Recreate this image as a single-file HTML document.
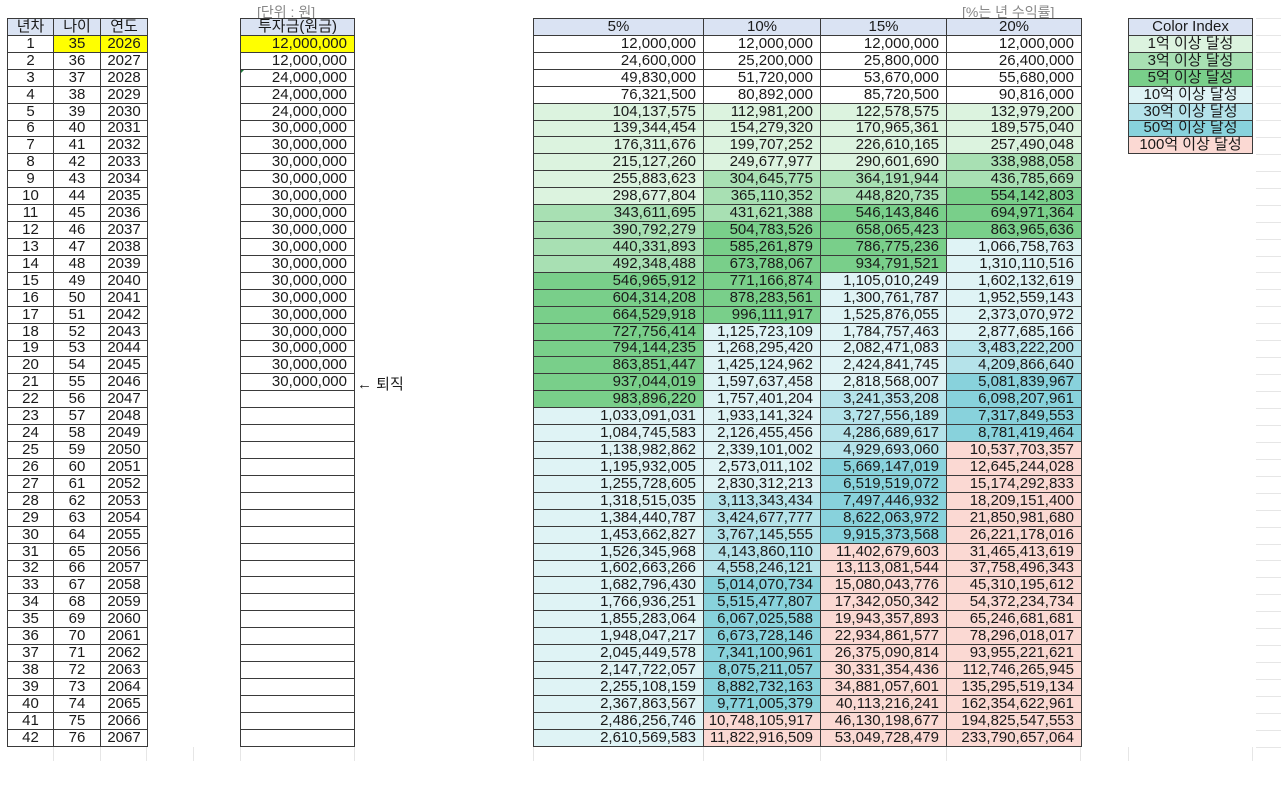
<!DOCTYPE html>
<html><head><meta charset="utf-8"><style>
body{margin:0;width:1281px;height:788px;background:#fff;position:relative;overflow:hidden;font-family:"Liberation Sans","Noto Sans CJK KR",sans-serif;color:#1a1a1a}
table{position:absolute;top:18px;border-collapse:collapse;table-layout:fixed;font-size:15px}
tr{height:16.93px}
td{border:1px solid #3a3a3a;padding:0 7px 0 2px;line-height:14px;white-space:nowrap;overflow:hidden;text-align:right}
.h td,td.h{background:#dae3f3;text-align:center;padding:0}
.c td{text-align:center;padding:0}
.y{background:#ffff00}
.a{background:#dcf3df}.b{background:#a8e0b3}.g{background:#79cf8a}
.d{background:#dff3f5}.e{background:#b5e3ea}.f{background:#88d2dc}.p{background:#fbd9d3}
.lab{position:absolute;font-size:14px;color:#888;top:2px}
.gl{position:absolute;left:1256px;width:25px;height:1px;background:#e6e6e6}
.vl{position:absolute;top:747px;height:14px;width:1px;background:#e6e6e6}
</style></head><body>
<div class="lab" style="left:257px">[단위 : 원]</div>
<div class="lab" style="left:962px">[%는 년 수익률]</div>
<div style="position:absolute;left:357px;top:373px;font-size:15px">← 퇴직</div>
<div style="position:absolute;left:240px;top:69px;width:0;height:0;border-top:5px solid #1e7a3c;border-right:5px solid transparent"></div>
<div class="gl" style="top:18px"></div><div class="gl" style="top:35px"></div><div class="gl" style="top:52px"></div><div class="gl" style="top:69px"></div><div class="gl" style="top:86px"></div><div class="gl" style="top:103px"></div><div class="gl" style="top:120px"></div><div class="gl" style="top:137px"></div><div class="gl" style="top:154px"></div><div class="gl" style="top:171px"></div><div class="gl" style="top:188px"></div><div class="gl" style="top:205px"></div><div class="gl" style="top:222px"></div><div class="gl" style="top:239px"></div><div class="gl" style="top:256px"></div><div class="gl" style="top:272px"></div><div class="gl" style="top:289px"></div><div class="gl" style="top:306px"></div><div class="gl" style="top:323px"></div><div class="gl" style="top:340px"></div><div class="gl" style="top:357px"></div><div class="gl" style="top:374px"></div><div class="gl" style="top:391px"></div><div class="gl" style="top:408px"></div><div class="gl" style="top:425px"></div><div class="gl" style="top:442px"></div><div class="gl" style="top:459px"></div><div class="gl" style="top:476px"></div><div class="gl" style="top:493px"></div><div class="gl" style="top:510px"></div><div class="gl" style="top:527px"></div><div class="gl" style="top:544px"></div><div class="gl" style="top:560px"></div><div class="gl" style="top:577px"></div><div class="gl" style="top:594px"></div><div class="gl" style="top:611px"></div><div class="gl" style="top:628px"></div><div class="gl" style="top:645px"></div><div class="gl" style="top:662px"></div><div class="gl" style="top:679px"></div><div class="gl" style="top:696px"></div><div class="gl" style="top:713px"></div><div class="gl" style="top:730px"></div><div class="gl" style="top:747px"></div>
<div class="vl" style="left:53px"></div><div class="vl" style="left:100px"></div><div class="vl" style="left:146px"></div><div class="vl" style="left:193px"></div><div class="vl" style="left:240px"></div><div class="vl" style="left:354px"></div><div class="vl" style="left:533px"></div><div class="vl" style="left:703px"></div><div class="vl" style="left:820px"></div><div class="vl" style="left:946px"></div><div class="vl" style="left:1080px"></div><div class="vl" style="left:1128px"></div><div class="vl" style="left:1252px"></div>

<table style="left:7px;width:140px">
<col style="width:46px"><col style="width:47px"><col style="width:47px">
<tr class="h"><td>년차</td><td>나이</td><td>연도</td></tr>
<tbody class="c">
<tr><td>1</td><td class="y">35</td><td class="y">2026</td></tr>
<tr><td>2</td><td>36</td><td>2027</td></tr><tr><td>3</td><td>37</td><td>2028</td></tr><tr><td>4</td><td>38</td><td>2029</td></tr><tr><td>5</td><td>39</td><td>2030</td></tr><tr><td>6</td><td>40</td><td>2031</td></tr><tr><td>7</td><td>41</td><td>2032</td></tr><tr><td>8</td><td>42</td><td>2033</td></tr><tr><td>9</td><td>43</td><td>2034</td></tr><tr><td>10</td><td>44</td><td>2035</td></tr><tr><td>11</td><td>45</td><td>2036</td></tr><tr><td>12</td><td>46</td><td>2037</td></tr><tr><td>13</td><td>47</td><td>2038</td></tr><tr><td>14</td><td>48</td><td>2039</td></tr><tr><td>15</td><td>49</td><td>2040</td></tr><tr><td>16</td><td>50</td><td>2041</td></tr><tr><td>17</td><td>51</td><td>2042</td></tr><tr><td>18</td><td>52</td><td>2043</td></tr><tr><td>19</td><td>53</td><td>2044</td></tr><tr><td>20</td><td>54</td><td>2045</td></tr><tr><td>21</td><td>55</td><td>2046</td></tr><tr><td>22</td><td>56</td><td>2047</td></tr><tr><td>23</td><td>57</td><td>2048</td></tr><tr><td>24</td><td>58</td><td>2049</td></tr><tr><td>25</td><td>59</td><td>2050</td></tr><tr><td>26</td><td>60</td><td>2051</td></tr><tr><td>27</td><td>61</td><td>2052</td></tr><tr><td>28</td><td>62</td><td>2053</td></tr><tr><td>29</td><td>63</td><td>2054</td></tr><tr><td>30</td><td>64</td><td>2055</td></tr><tr><td>31</td><td>65</td><td>2056</td></tr><tr><td>32</td><td>66</td><td>2057</td></tr><tr><td>33</td><td>67</td><td>2058</td></tr><tr><td>34</td><td>68</td><td>2059</td></tr><tr><td>35</td><td>69</td><td>2060</td></tr><tr><td>36</td><td>70</td><td>2061</td></tr><tr><td>37</td><td>71</td><td>2062</td></tr><tr><td>38</td><td>72</td><td>2063</td></tr><tr><td>39</td><td>73</td><td>2064</td></tr><tr><td>40</td><td>74</td><td>2065</td></tr><tr><td>41</td><td>75</td><td>2066</td></tr><tr><td>42</td><td>76</td><td>2067</td></tr>
</tbody></table>

<table style="left:240px;width:115px">
<tr class="h"><td>투자금(원금)</td></tr>
<tr><td class="y">12,000,000</td></tr><tr><td>12,000,000</td></tr><tr><td>24,000,000</td></tr><tr><td>24,000,000</td></tr><tr><td>24,000,000</td></tr>
<tr><td>30,000,000</td></tr><tr><td>30,000,000</td></tr><tr><td>30,000,000</td></tr><tr><td>30,000,000</td></tr><tr><td>30,000,000</td></tr><tr><td>30,000,000</td></tr><tr><td>30,000,000</td></tr><tr><td>30,000,000</td></tr><tr><td>30,000,000</td></tr><tr><td>30,000,000</td></tr><tr><td>30,000,000</td></tr><tr><td>30,000,000</td></tr><tr><td>30,000,000</td></tr><tr><td>30,000,000</td></tr><tr><td>30,000,000</td></tr><tr><td>30,000,000</td></tr>
<tr><td></td></tr><tr><td></td></tr><tr><td></td></tr><tr><td></td></tr><tr><td></td></tr><tr><td></td></tr><tr><td></td></tr><tr><td></td></tr><tr><td></td></tr><tr><td></td></tr><tr><td></td></tr><tr><td></td></tr><tr><td></td></tr><tr><td></td></tr><tr><td></td></tr><tr><td></td></tr><tr><td></td></tr><tr><td></td></tr><tr><td></td></tr><tr><td></td></tr><tr><td></td></tr>
</table>

<table style="left:533px;width:548px">
<col style="width:170px"><col style="width:117px"><col style="width:126px"><col style="width:135px">
<tr class="h"><td>5%</td><td>10%</td><td>15%</td><td>20%</td></tr>
<tr><td>12,000,000</td><td>12,000,000</td><td>12,000,000</td><td>12,000,000</td></tr>
<tr><td>24,600,000</td><td>25,200,000</td><td>25,800,000</td><td>26,400,000</td></tr>
<tr><td>49,830,000</td><td>51,720,000</td><td>53,670,000</td><td>55,680,000</td></tr>
<tr><td>76,321,500</td><td>80,892,000</td><td>85,720,500</td><td>90,816,000</td></tr>
<tr><td class="a">104,137,575</td><td class="a">112,981,200</td><td class="a">122,578,575</td><td class="a">132,979,200</td></tr>
<tr><td class="a">139,344,454</td><td class="a">154,279,320</td><td class="a">170,965,361</td><td class="a">189,575,040</td></tr>
<tr><td class="a">176,311,676</td><td class="a">199,707,252</td><td class="a">226,610,165</td><td class="a">257,490,048</td></tr>
<tr><td class="a">215,127,260</td><td class="a">249,677,977</td><td class="a">290,601,690</td><td class="b">338,988,058</td></tr>
<tr><td class="a">255,883,623</td><td class="b">304,645,775</td><td class="b">364,191,944</td><td class="b">436,785,669</td></tr>
<tr><td class="a">298,677,804</td><td class="b">365,110,352</td><td class="b">448,820,735</td><td class="g">554,142,803</td></tr>
<tr><td class="b">343,611,695</td><td class="b">431,621,388</td><td class="g">546,143,846</td><td class="g">694,971,364</td></tr>
<tr><td class="b">390,792,279</td><td class="g">504,783,526</td><td class="g">658,065,423</td><td class="g">863,965,636</td></tr>
<tr><td class="b">440,331,893</td><td class="g">585,261,879</td><td class="g">786,775,236</td><td class="d">1,066,758,763</td></tr>
<tr><td class="b">492,348,488</td><td class="g">673,788,067</td><td class="g">934,791,521</td><td class="d">1,310,110,516</td></tr>
<tr><td class="g">546,965,912</td><td class="g">771,166,874</td><td class="d">1,105,010,249</td><td class="d">1,602,132,619</td></tr>
<tr><td class="g">604,314,208</td><td class="g">878,283,561</td><td class="d">1,300,761,787</td><td class="d">1,952,559,143</td></tr>
<tr><td class="g">664,529,918</td><td class="g">996,111,917</td><td class="d">1,525,876,055</td><td class="d">2,373,070,972</td></tr>
<tr><td class="g">727,756,414</td><td class="d">1,125,723,109</td><td class="d">1,784,757,463</td><td class="d">2,877,685,166</td></tr>
<tr><td class="g">794,144,235</td><td class="d">1,268,295,420</td><td class="d">2,082,471,083</td><td class="e">3,483,222,200</td></tr>
<tr><td class="g">863,851,447</td><td class="d">1,425,124,962</td><td class="d">2,424,841,745</td><td class="e">4,209,866,640</td></tr>
<tr><td class="g">937,044,019</td><td class="d">1,597,637,458</td><td class="d">2,818,568,007</td><td class="f">5,081,839,967</td></tr>
<tr><td class="g">983,896,220</td><td class="d">1,757,401,204</td><td class="e">3,241,353,208</td><td class="f">6,098,207,961</td></tr>
<tr><td class="d">1,033,091,031</td><td class="d">1,933,141,324</td><td class="e">3,727,556,189</td><td class="f">7,317,849,553</td></tr>
<tr><td class="d">1,084,745,583</td><td class="d">2,126,455,456</td><td class="e">4,286,689,617</td><td class="f">8,781,419,464</td></tr>
<tr><td class="d">1,138,982,862</td><td class="d">2,339,101,002</td><td class="e">4,929,693,060</td><td class="p">10,537,703,357</td></tr>
<tr><td class="d">1,195,932,005</td><td class="d">2,573,011,102</td><td class="f">5,669,147,019</td><td class="p">12,645,244,028</td></tr>
<tr><td class="d">1,255,728,605</td><td class="d">2,830,312,213</td><td class="f">6,519,519,072</td><td class="p">15,174,292,833</td></tr>
<tr><td class="d">1,318,515,035</td><td class="e">3,113,343,434</td><td class="f">7,497,446,932</td><td class="p">18,209,151,400</td></tr>
<tr><td class="d">1,384,440,787</td><td class="e">3,424,677,777</td><td class="f">8,622,063,972</td><td class="p">21,850,981,680</td></tr>
<tr><td class="d">1,453,662,827</td><td class="e">3,767,145,555</td><td class="f">9,915,373,568</td><td class="p">26,221,178,016</td></tr>
<tr><td class="d">1,526,345,968</td><td class="e">4,143,860,110</td><td class="p">11,402,679,603</td><td class="p">31,465,413,619</td></tr>
<tr><td class="d">1,602,663,266</td><td class="e">4,558,246,121</td><td class="p">13,113,081,544</td><td class="p">37,758,496,343</td></tr>
<tr><td class="d">1,682,796,430</td><td class="f">5,014,070,734</td><td class="p">15,080,043,776</td><td class="p">45,310,195,612</td></tr>
<tr><td class="d">1,766,936,251</td><td class="f">5,515,477,807</td><td class="p">17,342,050,342</td><td class="p">54,372,234,734</td></tr>
<tr><td class="d">1,855,283,064</td><td class="f">6,067,025,588</td><td class="p">19,943,357,893</td><td class="p">65,246,681,681</td></tr>
<tr><td class="d">1,948,047,217</td><td class="f">6,673,728,146</td><td class="p">22,934,861,577</td><td class="p">78,296,018,017</td></tr>
<tr><td class="d">2,045,449,578</td><td class="f">7,341,100,961</td><td class="p">26,375,090,814</td><td class="p">93,955,221,621</td></tr>
<tr><td class="d">2,147,722,057</td><td class="f">8,075,211,057</td><td class="p">30,331,354,436</td><td class="p">112,746,265,945</td></tr>
<tr><td class="d">2,255,108,159</td><td class="f">8,882,732,163</td><td class="p">34,881,057,601</td><td class="p">135,295,519,134</td></tr>
<tr><td class="d">2,367,863,567</td><td class="f">9,771,005,379</td><td class="p">40,113,216,241</td><td class="p">162,354,622,961</td></tr>
<tr><td class="d">2,486,256,746</td><td class="p">10,748,105,917</td><td class="p">46,130,198,677</td><td class="p">194,825,547,553</td></tr>
<tr><td class="d">2,610,569,583</td><td class="p">11,822,916,509</td><td class="p">53,049,728,479</td><td class="p">233,790,657,064</td></tr>
</table>

<table style="left:1128px;width:125px">
<tr class="h"><td>Color Index</td></tr>
<tr class="c"><td class="a">1억 이상 달성</td></tr>
<tr class="c"><td class="b">3억 이상 달성</td></tr>
<tr class="c"><td class="g">5억 이상 달성</td></tr>
<tr class="c"><td class="d">10억 이상 달성</td></tr>
<tr class="c"><td class="e">30억 이상 달성</td></tr>
<tr class="c"><td class="f">50억 이상 달성</td></tr>
<tr class="c"><td class="p">100억 이상 달성</td></tr>
</table>
</body></html>
